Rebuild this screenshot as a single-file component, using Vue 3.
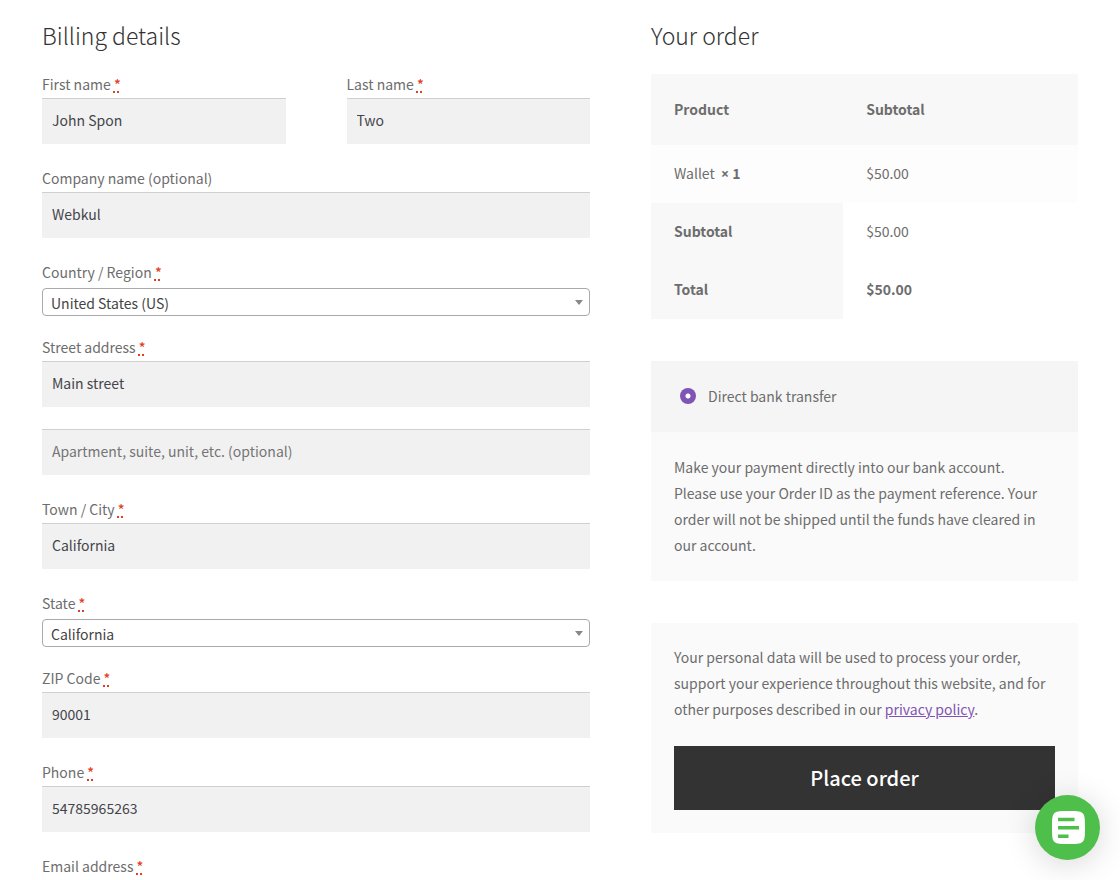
<script setup>
import { reactive } from 'vue'

const form = reactive({
  first: 'John Spon',
  last: 'Two',
  company: 'Webkul',
  country: 'United States (US)',
  street: 'Main street',
  unit: '',
  city: 'California',
  state: 'California',
  zip: '90001',
  phone: '54785965263',
  email: '',
  payment: 'bank'
})
</script>

<template>
  <form class="checkout" @submit.prevent>
    <section class="billing">
      <h3>Billing details</h3>
      <div class="pair">
        <div class="field">
          <label for="first">First name <abbr title="required">*</abbr></label>
          <input id="first" v-model="form.first" type="text">
        </div>
        <div class="field">
          <label for="last">Last name <abbr title="required">*</abbr></label>
          <input id="last" v-model="form.last" type="text">
        </div>
      </div>
      <div class="field">
        <label for="company">Company name (optional)</label>
        <input id="company" v-model="form.company" type="text">
      </div>
      <div class="field choice">
        <label for="country">Country / Region <abbr title="required">*</abbr></label>
        <div class="select">
          <select id="country" v-model="form.country"><option>United States (US)</option></select>
        </div>
      </div>
      <div class="field">
        <label for="street">Street address <abbr title="required">*</abbr></label>
        <input id="street" v-model="form.street" type="text">
      </div>
      <div class="field">
        <input v-model="form.unit" type="text" aria-label="Apartment, suite, unit, etc." placeholder="Apartment, suite, unit, etc. (optional)">
      </div>
      <div class="field">
        <label for="city">Town / City <abbr title="required">*</abbr></label>
        <input id="city" v-model="form.city" type="text">
      </div>
      <div class="field choice">
        <label for="state">State <abbr title="required">*</abbr></label>
        <div class="select">
          <select id="state" v-model="form.state"><option>California</option></select>
        </div>
      </div>
      <div class="field">
        <label for="zip">ZIP Code <abbr title="required">*</abbr></label>
        <input id="zip" v-model="form.zip" type="text">
      </div>
      <div class="field">
        <label for="phone">Phone <abbr title="required">*</abbr></label>
        <input id="phone" v-model="form.phone" type="tel">
      </div>
      <div class="field">
        <label for="email">Email address <abbr title="required">*</abbr></label>
        <input id="email" v-model="form.email" type="email">
      </div>
    </section>

    <section class="order">
      <h3>Your order</h3>
      <table>
        <thead>
          <tr><th>Product</th><th>Subtotal</th></tr>
        </thead>
        <tbody>
          <tr><td>Wallet&nbsp; <strong><span class="times">×</span> 1</strong></td><td>$50.00</td></tr>
        </tbody>
        <tfoot>
          <tr><th>Subtotal</th><td>$50.00</td></tr>
          <tr><th>Total</th><td><strong>$50.00</strong></td></tr>
        </tfoot>
      </table>

      <div class="method">
        <input id="bank" v-model="form.payment" type="radio" name="payment" value="bank">
        <label for="bank">Direct bank transfer</label>
      </div>
      <p class="box">Make your payment directly into our bank account.<br>Please use your Order ID as the payment reference. Your order will not be shipped until the funds have cleared in our account.</p>

      <div class="box place">
        <p>Your personal data will be used to process your order, support your experience throughout this website, and for other purposes described in our <a href="#privacy">privacy policy</a>.</p>
        <button type="submit">Place order</button>
      </div>
    </section>

    <button class="chat" type="button" aria-label="Open chat">
      <svg viewBox="0 0 33 33" aria-hidden="true">
        <path fill="#fff" d="M16.500 0C27 0 29 .6 30.700 2.300 32.400 4 33 6 33 16.500S32.400 29 30.700 30.700C29 32.400 27 33 16.500 33S4 32.400 2.300 30.700C.6 29 0 27 0 16.500S.6 4 2.300 2.300C4 .6 6 0 16.500 0z" />
        <path d="M6 8.500h16.500M6 16.800h21M6 25.200h10.500" fill="none" stroke="#4fbf4b" stroke-width="3.500" />
      </svg>
    </button>
  </form>
</template>

<style>
html {
  scrollbar-width: none;
}
body {
  margin: 0;
  background: #fff;
}
</style>

<style scoped>
* {
  box-sizing: border-box;
}
.checkout {
  display: grid;
  grid-template-columns: 548fr 427fr;
  column-gap: 61px;
  align-items: start;
  padding: 14px 42px 0;
  color: #6d6d6d;
  font: 400 14px/26px "Noto Sans CJK SC", "Open Sans", sans-serif;
}
h3 {
  margin: 0 0 16px;
  color: #333;
  font-size: 23px;
  font-weight: 300;
  line-height: 42px;
}
.order h3 {
  margin-bottom: 18px;
}
.pair {
  display: grid;
  grid-template-columns: 1fr 1fr;
  column-gap: 61px;
}
.field {
  display: flow-root;
  margin-bottom: 22px;
}
.choice {
  margin-bottom: 19px;
}
.field label {
  display: block;
  height: 26px;
  line-height: 24px;
}
abbr {
  color: #e2401c;
  font-weight: 500;
  text-decoration: underline dotted 2px;
}
.field input {
  display: block;
  width: 100%;
  height: 46px;
  padding: 0 10px 4px;
  border: 0;
  border-top: 1px solid #d0d0d0;
  border-radius: 0;
  background: #f1f1f1;
  color: #43454b;
  font: inherit;
}
.field input::placeholder {
  color: #757575;
}
.select {
  position: relative;
  padding-top: 2px;
}
.select::after {
  content: "";
  position: absolute;
  right: 7px;
  bottom: 11px;
  border: 4px solid transparent;
  border-top: 5px solid #888;
  border-bottom: 0;
}
select {
  appearance: none;
  display: block;
  width: 100%;
  height: 28px;
  padding: 1px 8px 0;
  border: 1px solid #aaa;
  border-radius: 4px;
  background: #fff;
  color: #444;
  font: inherit;
}
table {
  width: 100%;
  margin-bottom: 42px;
  border-spacing: 0;
  table-layout: fixed;
}
th,
td {
  padding: 15px 23px 17px;
  text-align: left;
}
th:first-child {
  width: 45%;
}
th,
strong {
  font-weight: 700;
}
.times {
  font-family: "Open Sans", sans-serif;
  line-height: 16px;
}
thead th {
  padding: 22px 23px 23px;
  background: #f8f8f8;
}
tbody td {
  background: #fdfdfd;
}
tfoot th {
  background: #f8f8f8;
}
.method {
  display: flex;
  align-items: center;
  height: 71px;
  padding: 0 29px 2px;
  background: #f5f5f5;
}
.method input {
  appearance: none;
  width: 16px;
  height: 16px;
  margin: 0 12px 0 0;
  border-radius: 50%;
  background: radial-gradient(circle, #fff 2px, #7f54b3 3px);
}
.box {
  margin: 0 0 42px;
  padding: 22px 23px 23px;
  background: #fafafa;
}
.place {
  padding-top: 21px;
}
.place p {
  margin: 0 0 24px;
}
a {
  color: #7f54b3;
}
.place button {
  display: block;
  width: 100%;
  height: 64px;
  border: 0;
  background: #333;
  color: #fff;
  font: 500 20px/32px "Noto Sans CJK SC", "Open Sans", sans-serif;
}
.chat {
  position: fixed;
  right: 20px;
  bottom: 20px;
  display: grid;
  place-items: center;
  width: 65px;
  height: 65px;
  padding: 0 0 0 1px;
  border: 0;
  border-radius: 50%;
  background: #4fbf4b;
  box-shadow: 0 4px 32px rgba(0, 0, 0, 0.16);
}
.chat svg {
  width: 33px;
  height: 33px;
}
</style>
